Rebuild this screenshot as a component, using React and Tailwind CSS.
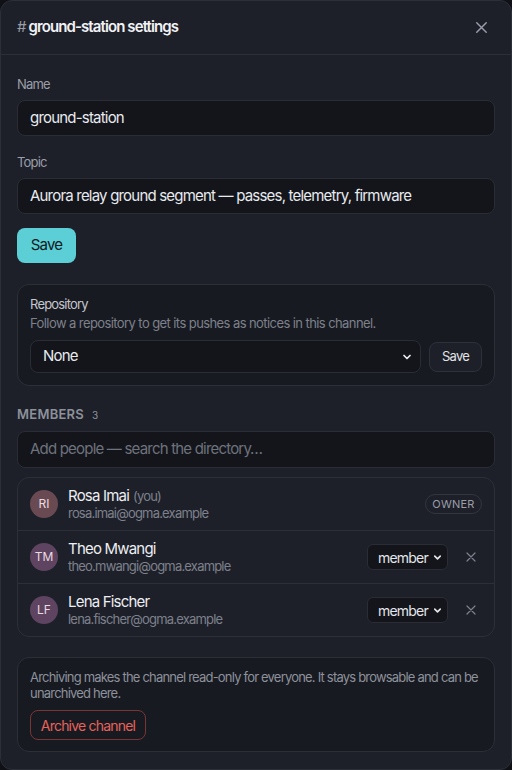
import React from "react";

function XIcon({ className }) {
  return (
    <svg className={className} viewBox="0 0 24 24" fill="none" stroke="currentColor" strokeWidth="1.8" strokeLinecap="round">
      <path d="M6 6l12 12M18 6L6 18" />
    </svg>
  );
}

function Chevron({ className }) {
  return (
    <svg className={className} viewBox="0 0 24 24" fill="none" stroke="currentColor" strokeWidth="3.5" strokeLinecap="round" strokeLinejoin="round">
      <path d="M6 9l6 6 6-6" />
    </svg>
  );
}

function Member({ initials, name, you, email, color, owner, last }) {
  return (
    <div className={`flex items-center px-3 ${last ? "h-[52px]" : "h-[53px] border-b border-[#2c2f38]"}`}>
      <div className={`w-7 h-7 rounded-full flex items-center justify-center text-[12px] tracking-normal text-[#eadbe0] ${color}`}>{initials}</div>
      <div className="ml-[10px] flex-1">
        <div className="text-[15px] leading-[18px] text-[#eceef2]">
          {name}
          {you && <span className="text-[13px] text-[#7d818c] ml-1">(you)</span>}
        </div>
        <div className="text-[13px] leading-[16px] text-[#7d818c]">{email}</div>
      </div>
      {owner ? (
        <div className="h-5 w-[57px] rounded-full border border-[#33363f] text-[11px] tracking-[0.02em] text-[#9a9ea8] flex items-center justify-center">OWNER</div>
      ) : (
        <div className="flex items-center">
          <div className="w-[81px] h-[26px] rounded-md bg-[#13151b] border border-[#2a2d35] flex items-center pl-[10px] pr-[4px] text-[14px] text-[#e4e6ea]">
            <span className="flex-1">member</span>
            <Chevron className="w-[11px] h-[11px] text-[#e4e6ea]" />
          </div>
          <button className="ml-[15px] mr-[3px] text-[#7d818c]">
            <XIcon className="w-4 h-4" />
          </button>
        </div>
      )}
    </div>
  );
}

export default function App() {
  return (
    <div className="w-[512px] h-[770px] bg-[#101116] tracking-[-0.05em]" style={{ fontFamily: "Inter, 'Noto Sans', sans-serif" }}>
      <div className="w-full h-full rounded-xl border border-[#2c2f38] bg-[#1e2029] flex flex-col">
        <div className="h-[54px] shrink-0 px-4 flex items-center justify-between border-b border-[#2c2f38]">
          <div className="text-[15px] font-semibold text-[#f1f2f5] tracking-[-0.06em]">
            <span className="text-[#9a9ea8] font-normal">#</span> ground-station settings
          </div>
          <button className="text-[#9a9ea8] mr-[4px]">
            <XIcon className="w-[19px] h-[19px]" />
          </button>
        </div>
        <div className="px-4 pt-[21px] flex flex-col">
          <label className="text-[13px] leading-[16px] text-[#9a9ea8]">Name</label>
          <div className="mt-[8px] h-[36px] rounded-lg bg-[#13151b] border border-[#2a2d35] flex items-center px-3 text-[15px] text-[#e8eaee]">ground-station</div>
          <label className="mt-[18px] text-[13px] leading-[16px] text-[#9a9ea8]">Topic</label>
          <div className="mt-[8px] h-[36px] rounded-lg bg-[#13151b] border border-[#2a2d35] flex items-center px-3 text-[15px] text-[#e8eaee]">Aurora relay ground segment — passes, telemetry, firmware</div>
          <div className="mt-[14px]">
            <button className="h-[35px] w-[59px] rounded-lg bg-[#5ccfd6] text-[15px] text-[#0f1a1c]">Save</button>
          </div>
          <div className="mt-[21px] h-[102px] rounded-xl border border-[#2c2f38] bg-[#181a21] px-3 pt-[11px]">
            <div className="text-[13px] leading-[16px] text-[#c4c7ce]">Repository</div>
            <div className="text-[13px] leading-[16px] text-[#7d818c] mt-[3px] tracking-[-0.045em]">Follow a repository to get its pushes as notices in this channel.</div>
            <div className="mt-[9px] flex items-center gap-2">
              <div className="flex-1 h-[33px] rounded-lg bg-[#13151b] border border-[#2a2d35] flex items-center pl-3 pr-[7px] text-[15px] text-[#e8eaee]">
                <span className="flex-1">None</span>
                <Chevron className="w-[12px] h-[12px]" />
              </div>
              <button className="h-[30px] w-[53px] rounded-lg border border-[#2e3139] bg-[#1e2029] text-[13px] text-[#e0e2e6]">Save</button>
            </div>
          </div>
          <div className="mt-[20px] flex items-baseline leading-[16px]">
            <span className="text-[13px] font-semibold tracking-[0.02em] text-[#8d919b]">MEMBERS</span>
            <span className="ml-[8px] text-[10px] text-[#8d919b]">3</span>
          </div>
          <div className="mt-[8px] h-[37px] rounded-lg bg-[#13151b] border border-[#2a2d35] flex items-center px-3 text-[15px] text-[#6e727c]">Add people — search the directory…</div>
          <div className="mt-[9px] rounded-xl border border-[#2c2f38]">
            <Member initials="RI" name="Rosa Imai" you email="rosa.imai@ogma.example" color="bg-[#6a4a52]" owner />
            <Member initials="TM" name="Theo Mwangi" email="theo.mwangi@ogma.example" color="bg-[#5e4460]" />
            <Member initials="LF" name="Lena Fischer" email="lena.fischer@ogma.example" color="bg-[#5e4460]" last />
          </div>
          <div className="mt-[20px] h-[95px] rounded-xl border border-[#2c2f38] bg-[#181a21] px-3 pt-[11px]">
            <div className="text-[13px] leading-[16px] text-[#8d919b]">Archiving makes the channel read-only for everyone. It stays browsable and can be unarchived here.</div>
            <button className="mt-[9px] h-[30px] w-[116px] rounded-lg border border-[#7a3535] text-[14px] text-[#e5635b]">Archive channel</button>
          </div>
        </div>
      </div>
    </div>
  );
}
